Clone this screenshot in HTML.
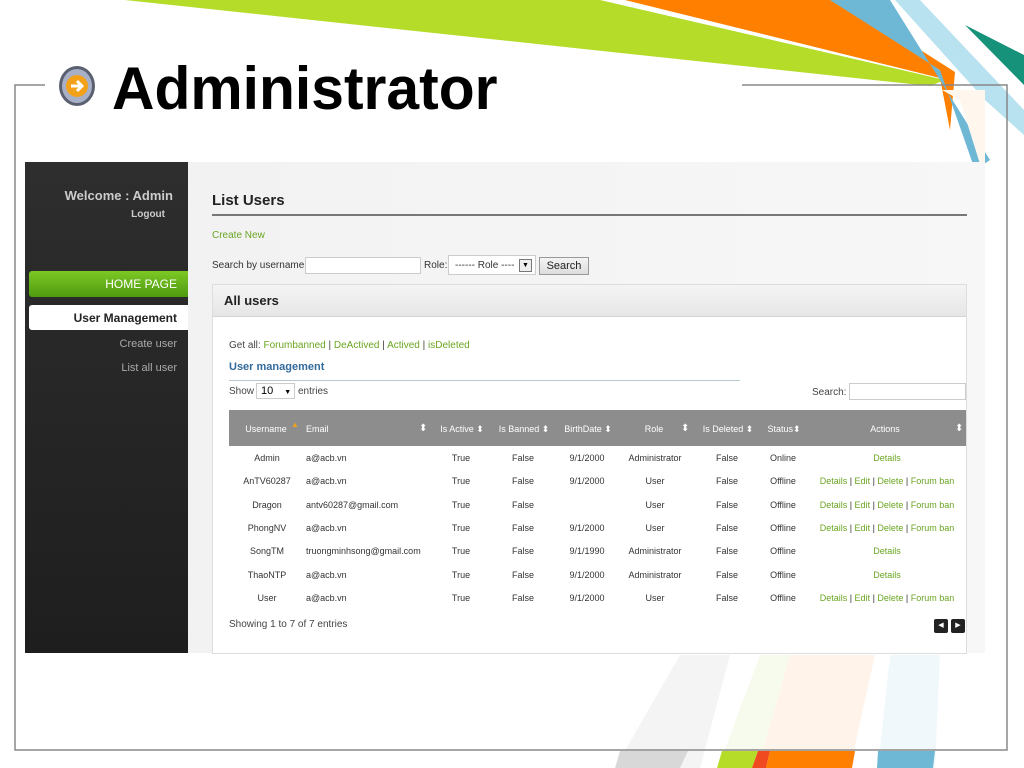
<!DOCTYPE html>
<html><head><meta charset="utf-8">
<style>
*{margin:0;padding:0;box-sizing:border-box}
body{width:1024px;height:768px;position:relative;overflow:hidden;background:#fff;font-family:"Liberation Sans",sans-serif}
.a{position:absolute;white-space:nowrap}
.r{text-align:right}
.g{color:#6aa521}
.t{font-size:9px;color:#333;text-align:center;transform:translateX(-50%)}
.h{font-size:9px;color:#fff;text-align:center;transform:translateX(-50%)}
</style></head><body>
<svg class="a" style="left:0;top:0" width="1024" height="768">
<polygon points="125,0 600,0 945,80 930,86" fill="#b5dc28"/>
<polygon points="625,0 842,0 955,72 950,130 940,78" fill="#ff8000"/>
<polygon points="830,0 890,0 990,160 975,170 940,70" fill="#6eb8d6"/>
<polygon points="895,0 920,0 1024,110 1024,135 985,100" fill="#b8e2ef"/>
<polygon points="965,25 1024,55 1024,85" fill="#16927a"/>
<polygon points="942,90 985,90 985,180 960,100" fill="#fff6ee"/>
<polygon points="680,655 730,655 700,768 615,768" fill="#f4f4f4"/>
<polygon points="760,655 800,655 770,768 718,768" fill="#f7fbee"/>
<polygon points="790,655 875,655 850,768 758,768" fill="#fff3ea"/>
<polygon points="890,655 940,655 935,768 878,768" fill="#f1f8fb"/>
<polygon points="620,751 688,751 680,768 615,768" fill="#d8d8d8"/>
<polygon points="722,751 758,751 752,768 717,768" fill="#b5dc28"/>
<polygon points="758,751 770,751 766,768 752,768" fill="#f04a20"/>
<polygon points="770,751 855,751 852,768 766,768" fill="#ff8000"/>
<polygon points="878,751 935,751 933,768 877,768" fill="#6eb8d6"/>
<polyline points="45,85 15,85 15,750 1007,750 1007,85 742,85" fill="none" stroke="#888" stroke-width="1.5"/>
<ellipse cx="77" cy="86" rx="18" ry="20" fill="#5a6070"/>
<ellipse cx="77" cy="86" rx="15" ry="17" fill="#a7b0c6"/>
<circle cx="77" cy="86" r="11" fill="#f4a11a"/>
<path d="M71 86h11M77 81l5 5-5 5" stroke="#fff" stroke-width="3" fill="none"/>
</svg>
<div class="a" style="left:112px;top:54px;font-size:60px;font-weight:bold;color:#000;letter-spacing:0px;transform:scaleX(0.98);transform-origin:left">Administrator</div>

<div class="a" style="left:25px;top:162px;width:163px;height:491px;background:linear-gradient(#2e2e2e,#1e1e1e)"></div>
<div class="a" style="left:188px;top:162px;width:797px;height:491px;background:linear-gradient(90deg,#f2f2f2,#f7f7f7)"></div>
<div class="a r" style="left:25px;width:148px;top:188px;font-size:13px;font-weight:bold;color:#ccc">Welcome : Admin</div>
<div class="a r" style="left:25px;width:140px;top:209px;font-size:10px;font-weight:bold;color:#ccc">Logout</div>
<div class="a" style="left:29px;top:271px;width:159px;height:26px;background:linear-gradient(#7cc824,#4f9a10);border-radius:3px 0 0 3px;color:#fff;font-size:12px;text-align:right;padding:6px 11px 0 0">HOME PAGE</div>
<div class="a" style="left:29px;top:305px;width:159px;height:25px;background:#fff;border-radius:3px 0 0 3px;color:#222;font-size:12px;font-weight:bold;text-align:right;padding:6px 11px 0 0">User Management</div>
<div class="a r" style="left:25px;width:152px;top:338px;font-size:11px;color:#aaa">Create user</div>
<div class="a r" style="left:25px;width:152px;top:362px;font-size:11px;color:#aaa">List all user</div>

<div class="a" style="left:212px;top:192px;font-size:15px;font-weight:bold;color:#222">List Users</div>
<div class="a" style="left:212px;top:214px;width:755px;height:2px;background:#777"></div>
<div class="a g" style="left:212px;top:230px;font-size:10px">Create New</div>
<div class="a" style="left:212px;top:260px;font-size:10px;color:#333">Search by username:</div>
<div class="a" style="left:305px;top:257px;width:116px;height:17px;background:#fff;border:1px solid #ccc"></div>
<div class="a" style="left:424px;top:260px;font-size:10px;color:#333">Role:</div>
<div class="a" style="left:448px;top:255px;width:88px;height:20px;background:#fff;border:1px solid #ccc;font-size:10px;color:#333;padding:4px 0 0 6px">------ Role ----</div>
<div class="a" style="left:519px;top:259px;width:13px;height:13px;border:1px solid #777;background:#eee;font-size:7px;text-align:center;line-height:12px">▼</div>
<div class="a" style="left:539px;top:257px;width:50px;height:18px;border:1px solid #999;background:linear-gradient(#f4f4f4,#ddd);font-size:11px;text-align:center;line-height:16px;color:#222">Search</div>

<div class="a" style="left:212px;top:284px;width:755px;height:370px;background:#fff;border:1px solid #ddd"></div>
<div class="a" style="left:213px;top:285px;width:753px;height:32px;background:linear-gradient(#f4f4f4,#e6e6e6);border-bottom:1px solid #d4d4d4"></div>
<div class="a" style="left:224px;top:293px;font-size:13px;font-weight:bold;color:#222">All users</div>
<div class="a" style="left:229px;top:340px;font-size:10px;color:#444">Get all: <span class="g">Forumbanned</span> | <span class="g">DeActived</span> | <span class="g">Actived</span> | <span class="g">isDeleted</span></div>
<div class="a" style="left:229px;top:361px;font-size:11px;font-weight:bold;color:#336b9c">User management</div>
<div class="a" style="left:229px;top:380px;width:511px;height:1px;background:#b8c8d0"></div>
<div class="a" style="left:229px;top:386px;font-size:10px;color:#444">Show</div>
<div class="a" style="left:256px;top:383px;width:39px;height:16px;border:1px solid #ccc;background:#fff;font-size:11px;padding:1px 0 0 4px">10 <span style="font-size:7px;margin-left:8px">▼</span></div>
<div class="a" style="left:298px;top:386px;font-size:10px;color:#444">entries</div>
<div class="a" style="left:812px;top:387px;font-size:10px;color:#444">Search:</div>
<div class="a" style="left:849px;top:383px;width:117px;height:17px;border:1px solid #ccc;background:#fff"></div>

<div class="a" style="left:229px;top:410px;width:737px;height:36px;background:#8d8d8d"></div>
<div class="a h" style="left:266px;top:424px">Username</div>
<div class="a" style="left:291px;top:420px;font-size:8px;color:#f0a020">▲</div>
<div class="a" style="left:306px;top:424px;font-size:9px;color:#fff">Email</div>
<div class="a h" style="left:462px;top:424px">Is Active ⬍</div>
<div class="a h" style="left:524px;top:424px">Is Banned ⬍</div>
<div class="a h" style="left:588px;top:424px">BirthDate ⬍</div>
<div class="a h" style="left:654px;top:424px">Role</div>
<div class="a h" style="left:728px;top:424px">Is Deleted ⬍</div>
<div class="a h" style="left:784px;top:424px">Status⬍</div>
<div class="a h" style="left:885px;top:424px">Actions</div>
<div class="a" style="left:419px;top:423px;font-size:10px;color:#fff">⬍</div>
<div class="a" style="left:681px;top:423px;font-size:10px;color:#fff">⬍</div>
<div class="a" style="left:955px;top:423px;font-size:10px;color:#fff">⬍</div>

<div id="rows"></div>
<script>
var R=[["Admin","a@acb.vn","9/1/2000","Administrator","Online",0],
["AnTV60287","a@acb.vn","9/1/2000","User","Offline",1],
["Dragon","antv60287@gmail.com","","User","Offline",1],
["PhongNV","a@acb.vn","9/1/2000","User","Offline",1],
["SongTM","truongminhsong@gmail.com","9/1/1990","Administrator","Offline",0],
["ThaoNTP","a@acb.vn","9/1/2000","Administrator","Offline",0],
["User","a@acb.vn","9/1/2000","User","Offline",1]];
var h="";
R.forEach(function(r,i){var y=453+i*23.3;
h+='<div class="a t" style="left:267px;top:'+y+'px">'+r[0]+'</div>';
h+='<div class="a" style="left:306px;top:'+y+'px;font-size:9px;color:#333">'+r[1]+'</div>';
h+='<div class="a t" style="left:461px;top:'+y+'px">True</div>';
h+='<div class="a t" style="left:523px;top:'+y+'px">False</div>';
h+='<div class="a t" style="left:587px;top:'+y+'px">'+r[2]+'</div>';
h+='<div class="a t" style="left:655px;top:'+y+'px">'+r[3]+'</div>';
h+='<div class="a t" style="left:727px;top:'+y+'px">False</div>';
h+='<div class="a t" style="left:783px;top:'+y+'px">'+r[4]+'</div>';
h+='<div class="a t" style="left:887px;top:'+y+'px">'+(r[5]?'<span class="g">Details</span> | <span class="g">Edit</span> | <span class="g">Delete</span> | <span class="g">Forum ban</span>':'<span class="g">Details</span>')+'</div>';
});
document.getElementById("rows").innerHTML=h;
</script>
<div class="a" style="left:229px;top:619px;font-size:10px;color:#444">Showing 1 to 7 of 7 entries</div>
<div class="a" style="left:934px;top:619px;width:14px;height:14px;background:#222;border-radius:2px;color:#fff;font-size:7px;text-align:center;line-height:14px">◀</div>
<div class="a" style="left:951px;top:619px;width:14px;height:14px;background:#222;border-radius:2px;color:#fff;font-size:7px;text-align:center;line-height:14px">▶</div>
</body></html>
